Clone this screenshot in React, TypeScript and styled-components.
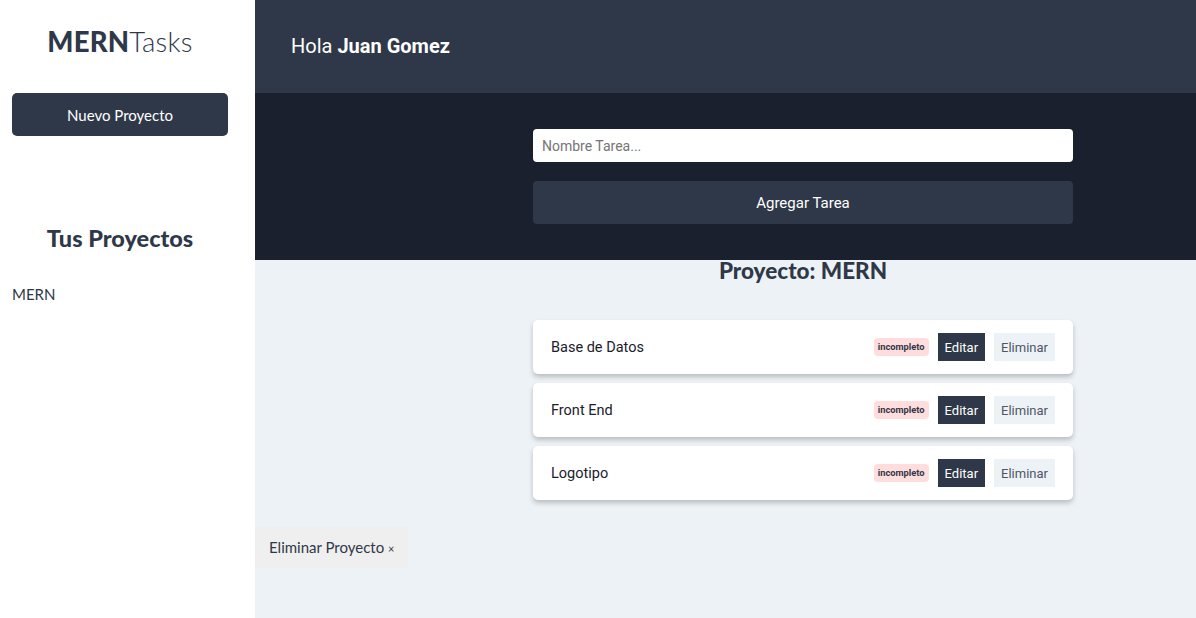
import React from "react";
import styled, { createGlobalStyle } from "styled-components";

const Global = createGlobalStyle`
  html, body { margin: 0; padding: 0; }
  body { font-family: "Lato", "Open Sans", sans-serif; background: #edf2f6; }
  * { box-sizing: border-box; }
`;

const Layout = styled.div`
  display: flex;
  width: 1196px;
  height: 618px;
  overflow: hidden;
`;

const Sidebar = styled.aside`
  width: 255px;
  flex: 0 0 255px;
  background: #ffffff;
  padding: 26px 27px 0 12px;
  display: flex;
  flex-direction: column;
`;

const Logo = styled.h1`
  margin: 0;
  text-align: center;
  font-family: "Lato", sans-serif;
  font-size: 27.5px;
  line-height: 32px;
  font-weight: 300;
  color: #2f3848;
  letter-spacing: 0.2px;
  span { font-weight: 900; }
`;

const NewButton = styled.button`
  margin-top: 35px;
  width: 216px;
  height: 43px;
  border: none;
  border-radius: 5px;
  background: #2f3848;
  color: #ffffff;
  font-family: "Lato", sans-serif;
  font-size: 15px;
  cursor: pointer;
`;

const SideTitle = styled.h2`
  margin: 88px 0 0 0;
  text-align: center;
  font-family: "Lato", sans-serif;
  font-size: 23.5px;
  font-weight: 900;
  color: #2f3848;
  line-height: 28px;
`;

const ProjectList = styled.ul`
  list-style: none;
  margin: 32px 0 0 0;
  padding: 0;
`;

const ProjectItem = styled.li`
  font-family: "Lato", sans-serif;
  font-size: 15px;
  color: #2f3848;
  line-height: 20px;
`;

const Main = styled.main`
  flex: 1;
  display: flex;
  flex-direction: column;
  background: #edf2f6;
`;

const Header = styled.header`
  height: 93px;
  background: #2f3848;
  display: flex;
  align-items: center;
  padding-left: 36px;
  padding-bottom: 1px;
`;

const Greeting = styled.p`
  margin: 0;
  font-family: "Roboto", sans-serif;
  font-size: 20px;
  color: #ffffff;
  span { font-weight: 700; }
`;

const FormArea = styled.section`
  height: 167px;
  background: #1a202d;
  display: flex;
  flex-direction: column;
  align-items: flex-start;
  padding-top: 36px;
  padding-left: 278px;
`;

const Input = styled.input`
  width: 540px;
  height: 33px;
  border: none;
  border-radius: 4px;
  padding: 0 9px;
  font-family: "Roboto", sans-serif;
  font-size: 14px;
  color: #2f3848;
  &::placeholder { color: #757575; }
`;

const AddButton = styled.button`
  margin-top: 19px;
  width: 540px;
  height: 43px;
  border: none;
  border-radius: 4px;
  background: #2f3848;
  color: #ffffff;
  font-family: "Roboto", sans-serif;
  font-size: 15px;
`;

const Content = styled.section`
  flex: 1;
  display: flex;
  flex-direction: column;
`;

const TaskColumn = styled.div`
  width: 540px;
  margin-left: 278px;
  display: flex;
  flex-direction: column;
`;

const ProjectTitle = styled.h2`
  margin: 0;
  height: 22px;
  line-height: 22px;
  text-align: center;
  font-family: "Lato", sans-serif;
  font-size: 22.5px;
  font-weight: 900;
  color: #2f3848;
`;

const TaskList = styled.ul`
  list-style: none;
  margin: 38px 0 0 0;
  padding: 0;
  display: flex;
  flex-direction: column;
  gap: 9px;
`;

const Task = styled.li`
  height: 54px;
  background: #ffffff;
  border-radius: 5px;
  box-shadow: 0 3px 5px rgba(0, 0, 0, 0.22);
  display: flex;
  align-items: center;
  padding: 0 18px;
`;

const TaskName = styled.p`
  margin: 0;
  flex: 1;
  font-family: "Roboto", sans-serif;
  font-size: 14.5px;
  color: #1a202d;
`;

const Actions = styled.div`
  display: flex;
  align-items: center;
`;

const Badge = styled.span`
  background: #ffdddd;
  color: #2f3848;
  font-family: "Roboto", sans-serif;
  font-weight: 700;
  font-size: 9.3px;
  border-radius: 4px;
  padding: 3px 4px;
  margin-right: 9px;
  line-height: 12px;
`;

const ActionButton = styled.button<{ $primary?: boolean }>`
  height: 28px;
  border: none;
  padding: 0 7px;
  margin-left: ${(p) => (p.$primary ? "0" : "9px")};
  background: ${(p) => (p.$primary ? "#2f3848" : "#edf2f6")};
  color: ${(p) => (p.$primary ? "#ffffff" : "#4f5766")};
  font-family: "Roboto", sans-serif;
  font-size: 13px;
`;

const DeleteProject = styled.button`
  margin-top: 27px;
  align-self: flex-start;
  height: 41px;
  padding: 0 14px;
  border: none;
  background: #efefef;
  color: #2f3848;
  font-family: "Lato", sans-serif;
  font-size: 15px;
  padding-bottom: 2px;
  span { font-size: 11px; margin-left: 0; }
`;

const tasks = ["Base de Datos", "Front End", "Logotipo"];

export default function App() {
  return (
    <>
      <Global />
      <Layout>
        <Sidebar>
          <Logo>
            <span>MERN</span>Tasks
          </Logo>
          <NewButton>Nuevo Proyecto</NewButton>
          <SideTitle>Tus Proyectos</SideTitle>
          <ProjectList>
            <ProjectItem>MERN</ProjectItem>
          </ProjectList>
        </Sidebar>
        <Main>
          <Header>
            <Greeting>
              Hola <span>Juan Gomez</span>
            </Greeting>
          </Header>
          <FormArea>
            <Input placeholder="Nombre Tarea..." />
            <AddButton>Agregar Tarea</AddButton>
          </FormArea>
          <Content>
            <TaskColumn>
              <ProjectTitle>Proyecto: MERN</ProjectTitle>
              <TaskList>
                {tasks.map((t) => (
                  <Task key={t}>
                    <TaskName>{t}</TaskName>
                    <Actions>
                      <Badge>incompleto</Badge>
                      <ActionButton $primary>Editar</ActionButton>
                      <ActionButton>Eliminar</ActionButton>
                    </Actions>
                  </Task>
                ))}
              </TaskList>
            </TaskColumn>
            <DeleteProject>
              Eliminar Proyecto <span>×</span>
            </DeleteProject>
          </Content>
        </Main>
      </Layout>
    </>
  );
}
